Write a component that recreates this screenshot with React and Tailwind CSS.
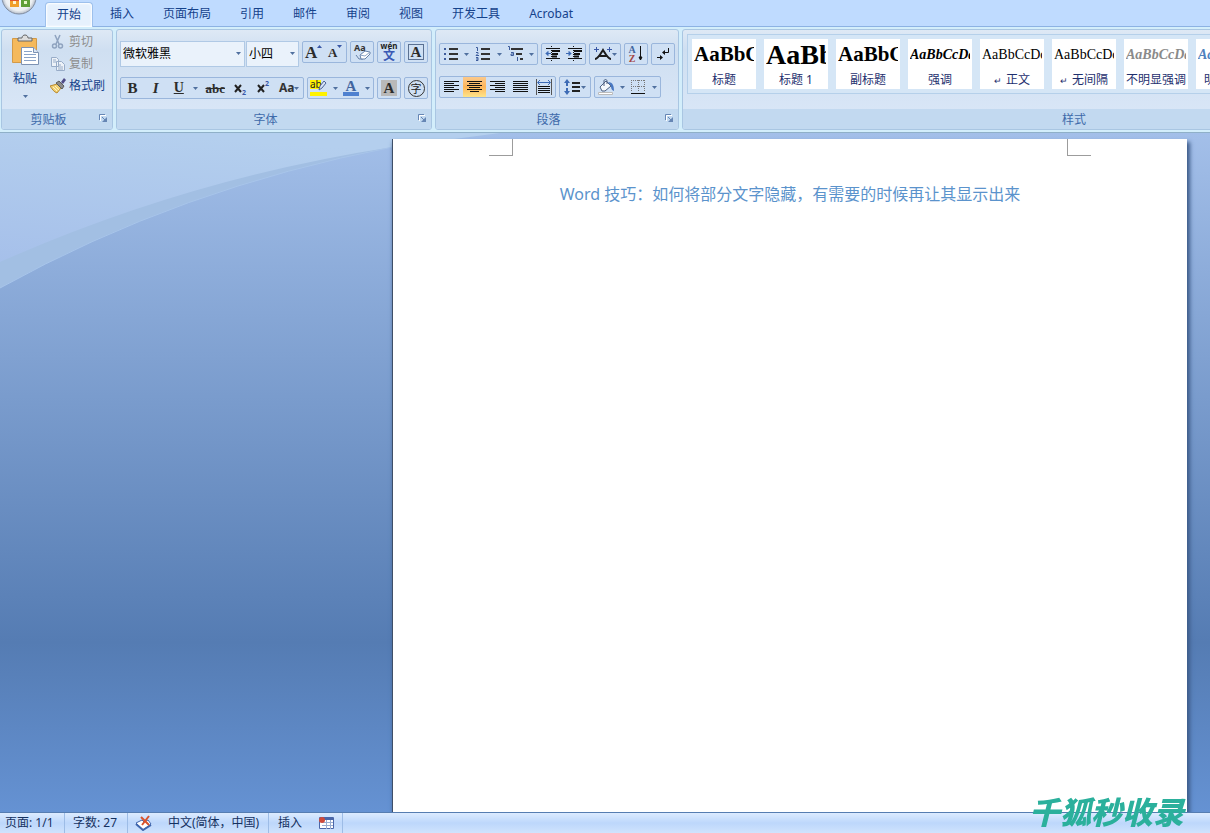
import clsx from "clsx";

const TABS = ["开始", "插入", "页面布局", "引用", "邮件", "审阅", "视图", "开发工具", "Acrobat"];

const STYLES = [
  { name: "标题", sample: "AaBbC", look: "text-[21px] font-bold text-black" },
  { name: "标题 1", sample: "AaBb", look: "text-[28px] font-bold text-black" },
  { name: "副标题", sample: "AaBbC", look: "text-[21px] font-bold text-black" },
  { name: "强调", sample: "AaBbCcDd", look: "text-[14px] font-bold italic text-black" },
  { name: "正文", sample: "AaBbCcDd", look: "text-[14px] text-black", mark: true },
  { name: "无间隔", sample: "AaBbCcDd", look: "text-[14px] text-black", mark: true },
  { name: "不明显强调", sample: "AaBbCcDd", look: "text-[14px] font-bold italic text-[#8a8a8a]" },
  { name: "明显强调", sample: "AaBbCcDd", look: "text-[14px] font-bold italic text-[#4f81bd]" },
];

export default function App() {
  return (
    <div className="flex h-screen flex-col overflow-hidden bg-[#bfdbff] font-['Noto_Sans','Noto_Sans_CJK_SC',sans-serif] text-[12px] leading-4 text-[#15428b]">
      <TabBar />
      <Ribbon />
      <Workspace />
      <StatusBar />
      <div className="pointer-events-none fixed right-[26px] bottom-1 font-['Noto_Sans_CJK_SC',sans-serif] text-[31px] leading-9 font-black text-[#2bb09c] italic">
        千狐秒收录
      </div>
    </div>
  );
}

function TabBar() {
  return (
    <header className="relative flex h-[27px] shrink-0 items-end border-b border-[#8db2e3] bg-[#bfdbff] pl-[45px]">
      <button aria-label="Office" className="absolute top-0 left-0">
        <OfficeOrb />
      </button>
      <nav className="flex items-end gap-[5px]">
        {TABS.map((tab, i) => (
          <button
            key={tab}
            className={clsx(
              "h-[25px] shrink-0 rounded-t border border-b-0 px-[11px] whitespace-nowrap",
              i === 0 ? "-mb-px border-[#9dc0ec] bg-[#e6f1fd] shadow-[inset_0_0_2px_1px_#ffffff]" : "border-transparent"
            )}
          >
            {tab}
          </button>
        ))}
      </nav>
    </header>
  );
}

function Ribbon() {
  return (
    <div className="flex h-[106px] shrink-0 gap-[3px] overflow-hidden border-b border-[#8fb0c8] bg-[#d3eefb] px-px pt-[2px] pb-[2px]">
      <Group title="剪贴板" className="w-[112px]" launcher>
        <Clipboard />
      </Group>
      <Group title="字体" className="w-[316px]" launcher>
        <FontGroup />
      </Group>
      <Group title="段落" className="w-[244px]" launcher>
        <ParagraphGroup />
      </Group>
      <Group title="样式" className="w-[784px]">
        <StyleGallery />
      </Group>
    </div>
  );
}

function Group({ title, className, launcher, children }) {
  return (
    <section
      className={clsx(
        "flex shrink-0 flex-col overflow-hidden rounded-[3px] border border-[#a9c6e2] bg-linear-to-b from-[#dee9f5] via-[#cfdff1] via-20% to-[#dbe8f8]",
        className
      )}
    >
      <div className="min-h-0 flex-1">{children}</div>
      <footer className="flex h-5 items-center bg-[#c2d9f0] pt-[2px] text-[#3e6aaa]">
        <span className={clsx("flex-1 text-center", launcher && "pr-1")}>{title}</span>
        {launcher && (
          <button aria-label={`${title}设置`} className="mr-1 mb-1">
            <svg width="9" height="9" fill="none" stroke="#6686b4">
              <path d="M1.500 7V1.500H7" stroke="#fff" />
              <path d="M.5 6V.5H6M3 3l3 3" />
              <path d="M8 3v5H3z" fill="#6686b4" stroke="none" />
            </svg>
          </button>
        )}
      </footer>
    </section>
  );
}

function Clipboard() {
  return (
    <div className="flex h-full gap-[2px]">
      <button className="flex w-[46px] flex-col items-center pt-1">
        <PasteIcon />
        <span className="mt-[5px]">粘贴</span>
        <Caret className="mt-2" />
      </button>
      <div className="flex flex-col gap-[2px] pt-[2px]">
        <button disabled className="flex h-5 items-center gap-[3px] text-[#8d8d8d]">
          <svg width="16" height="16" fill="none" stroke="#8fa3bf" strokeWidth="1.500">
            <path d="M5 1l4 9M10 1L6 10" />
            <circle cx="4.500" cy="12" r="2" />
            <circle cx="10.500" cy="12" r="2" />
          </svg>
          剪切
        </button>
        <button disabled className="flex h-5 items-center gap-[3px] text-[#8d8d8d]">
          <svg width="16" height="16" fill="#edf2f8" stroke="#98acc8">
            <path d="M1.500 1.500h5l2 2v7h-7zM6.500 5.500h5l3 3v6h-8z" />
            <path d="M3 4h3M3 6h3M8 9h3M8 11h5M8 13h5" />
          </svg>
          复制
        </button>
        <button className="flex h-5 items-center gap-[3px]">
          <svg width="16" height="16">
            <path d="M0 8l7-2 4 4-4 5c-3-1-5-4-7-7z" fill="#f0cf72" stroke="#b98a2f" />
            <path d="M3 9l4 4M5 8l4 4" stroke="#fff3c0" />
            <path d="M6 5l3-2 5 5-2 3z" fill="#8c8c8c" stroke="#5c5c5c" />
            <path d="M11 4l3-4 2 2-3 4z" fill="#4e4a86" />
          </svg>
          格式刷
        </button>
      </div>
    </div>
  );
}

function FontGroup() {
  return (
    <div className="flex flex-col gap-[10px] px-[3px] pt-[11px]">
      <div className="flex h-[26px] items-start gap-[3px]">
        <div className="flex gap-px">
          <Combo label="字体" value="微软雅黑" className="w-[125px]" />
          <Combo label="字号" value="小四" className="w-[53px]" />
        </div>
        <Box className="w-[45px]">
          <Tool label="增大字体">
            <Glyph size={17} className="font-bold">A</Glyph>
            <Tick up />
          </Tool>
          <Tool label="缩小字体">
            <Glyph size={13} className="font-bold">A</Glyph>
            <Tick />
          </Tool>
        </Box>
        <Box className="w-6">
          <Tool label="清除格式">
            <svg width="18" height="18">
              <text x="1" y="8" fontSize="9" fontWeight="700" fill="#333">Aa</text>
              <path d="M3 12l3 4h4" fill="none" stroke="#6681a8" />
              <path d="M7 12l5-4 5 1v2l-5 5H8z" fill="#fff" stroke="#6681a8" />
              <path d="M7 12l5 1 5-4" fill="none" stroke="#8da4c5" />
            </svg>
          </Tool>
        </Box>
        <Box className="w-6">
          <Tool label="拼音指南">
            <svg width="20" height="20">
              <text x="10" y="7" fontSize="8" fontWeight="700" textAnchor="middle" fill="#222">wén</text>
              <text x="10" y="18" fontSize="12" fontWeight="700" textAnchor="middle" fill="#3a59b5">文</text>
            </svg>
          </Tool>
        </Box>
        <Box className="w-6">
          <Tool label="字符边框">
            <span className="flex size-4 items-center justify-center border border-[#5b7192]">
              <Glyph size={15} className="font-bold">A</Glyph>
            </span>
          </Tool>
        </Box>
      </div>
      <div className="flex gap-[3px]">
        <Box className="w-[184px]">
          <Tool label="加粗"><Glyph size={15} className="font-bold">B</Glyph></Tool>
          <Tool label="倾斜"><Glyph size={15} className="font-bold italic">I</Glyph></Tool>
          <Tool label="下划线"><Glyph size={14} className="font-bold underline">U</Glyph></Tool>
          <DropArrow />
          <Tool label="删除线" wide><Glyph size={13} className="font-bold line-through">abc</Glyph></Tool>
          <Tool label="下标">
            <Script y={15} />
          </Tool>
          <Tool label="上标">
            <Script y={6} />
          </Tool>
          <Tool label="更改大小写" wide>
            <span className="text-[12px] font-bold text-[#333]">Aa</span>
            <Caret />
          </Tool>
        </Box>
        <Box className="w-[67px]">
          <Tool label="突出显示">
            <svg width="20" height="20">
              <path d="M1 2h11v9H1zM1 14h17v4H1z" fill="#fff200" />
              <text x="1" y="10" fontSize="10" fill="#222">ab</text>
              <path d="M10 12l1-4 4-5 2 2-4 5z" fill="#d7e3f6" stroke="#4b6397" />
            </svg>
          </Tool>
          <DropArrow />
          <Tool label="字体颜色">
            <svg width="18" height="20">
              <text x="9" y="13" fontSize="15" fontWeight="700" textAnchor="middle" fill="#42659f" fontFamily="Liberation Serif, serif">A</text>
              <path d="M1 14h16v4H1z" fill="#4f81d0" />
            </svg>
          </Tool>
          <DropArrow />
        </Box>
        <Box className="w-6">
          <Tool label="字符底纹">
            <span className="flex size-4 items-center justify-center bg-[#b9b9b9]">
              <Glyph size={15} className="font-bold">A</Glyph>
            </span>
          </Tool>
        </Box>
        <Box className="w-6">
          <Tool label="带圈字符">
            <span className="flex size-[17px] items-center justify-center rounded-full border border-[#333] text-[11px] leading-none text-[#222]">
              字
            </span>
          </Tool>
        </Box>
      </div>
    </div>
  );
}

function ParagraphGroup() {
  return (
    <div className="flex flex-col gap-[11px] px-[3px] pt-[13px]">
      <div className="flex gap-[3px]">
        <Box className="w-[99px]">
          <Tool label="项目符号">
            <Lines rows={[[6, 9], [6, 9], [6, 9]]} step={5}>
              <path d="M1 2h2v2H1zM1 7h2v2H1zM1 12h2v2H1z" fill="#3d5c9c" />
            </Lines>
          </Tool>
          <DropArrow />
          <Tool label="编号">
            <Lines rows={[[6, 9], [6, 9], [6, 9]]} step={5}>
              <path d="M1 1.500h1.500V5M1 6.500h2v1L1 9.500h3M1 11.500h2v3H1m0-1.500h2" stroke="#3d5c9c" fill="none" />
            </Lines>
          </Tool>
          <DropArrow />
          <Tool label="多级列表">
            <Lines rows={[[4, 12], [9, 6], [13, 3]]} step={5}>
              <path d="M1 .5h1.500V4M4 6.500h2.500v3H4V8h2M10.500 11v4" stroke="#3d5c9c" fill="none" />
            </Lines>
          </Tool>
          <DropArrow />
        </Box>
        <Box className="w-[45px]">
          <Tool label="减少缩进量"><IndentIcon left /></Tool>
          <Tool label="增加缩进量"><IndentIcon /></Tool>
        </Box>
        <Box className="w-8">
          <Tool label="中文版式">
            <svg width="18" height="16" fill="none" stroke="#1c1c1c" strokeWidth="2">
              <path d="M1 13c3 0 5-4 8-9 3 5 5 9 8 9M6 10h6" />
              <path d="M0 3.500h5M2.500 1v5M13 3.500h5M15.500 1v5" stroke="#3856a5" strokeWidth="1" />
            </svg>
            <Caret />
          </Tool>
        </Box>
        <Box className="w-6">
          <Tool label="排序">
            <svg width="18" height="18">
              <text x="5" y="8" fontSize="10" fontWeight="700" textAnchor="middle" fill="#42659f" fontFamily="Liberation Serif, serif">A</text>
              <text x="5" y="17" fontSize="10" fontWeight="700" textAnchor="middle" fill="#a34545" fontFamily="Liberation Serif, serif">Z</text>
              <path d="M13.500 1v14M12 12l1.500 3 1.500-3z" stroke="#111" fill="#111" />
            </svg>
          </Tool>
        </Box>
        <Box className="w-6">
          <Tool label="显示编辑标记">
            <svg width="14" height="16" fill="none" stroke="#111">
              <path d="M12.500 2v4.500H7" />
              <path d="M9 4L6 6.500 9 9zM4 9l3 2.500L4 14z" fill="#111" stroke="none" />
              <path d="M1 11.500h4" />
            </svg>
          </Tool>
        </Box>
      </div>
      <div className="flex gap-[3px]">
        <Box className="w-[117px]">
          <Tool label="左对齐">
            <Lines rows={[[0, 15], [0, 10], [0, 15], [0, 10], [0, 15], [0, 10]]} step={2} />
          </Tool>
          <Tool label="居中" active>
            <Lines rows={[[0, 15], [2, 11], [0, 15], [2, 11], [0, 15], [3, 9]]} step={2} />
          </Tool>
          <Tool label="右对齐">
            <Lines rows={[[0, 15], [5, 10], [0, 15], [5, 10], [0, 15], [5, 10]]} step={2} />
          </Tool>
          <Tool label="两端对齐">
            <Lines rows={[[0, 15], [0, 15], [0, 15], [0, 15], [0, 15], [0, 15]]} step={2} />
          </Tool>
          <Tool label="分散对齐">
            <svg width="16" height="16" fill="none" stroke="#111">
              <path d="M2 7.500h12M2 9.500h12M2 11.500h12M2 13.500h12" />
              <path d="M.5 0v16M15.500 0v16" stroke="#555" />
              <path d="M2 3.500h12M4 1L1.500 3.500 4 6M12 1l2.500 2.500L12 6" stroke="#3d6bb5" />
            </svg>
          </Tool>
        </Box>
        <Box className="w-8">
          <Tool label="行距">
            <svg width="17" height="16" fill="#3d6bb5">
              <path d="M8 3h8v2H8zM8 7h8v2H8zM8 11h8v2H8z" fill="#222" />
              <path d="M0 4l3-4 3 4H4v3H2V4zM0 12l3 4 3-4H4V9H2v3z" />
            </svg>
            <Caret />
          </Tool>
        </Box>
        <Box className="w-[67px]">
          <Tool label="底纹">
            <svg width="18" height="17">
              <path d="M3 8l6-6 5 5-6 5H5z" fill="#f4f7fb" stroke="#4c5f80" />
              <path d="M7 7V2c0-2 3-2 3 0v3" fill="none" stroke="#4c5f80" />
              <path d="M11 3c5 0 6 4 6 9-3-1-3-4-3-5z" fill="#4878c2" />
              <path d="M1.500 13.500h14v2h-14z" fill="#fff" stroke="#bbb" />
            </svg>
          </Tool>
          <DropArrow />
          <Tool label="边框">
            <svg width="14" height="14" fill="none" stroke="#777">
              <path d="M0 .5h14M.5 0v12M7.500 0v12M13.500 0v12M0 6.500h14" strokeDasharray="1 1" />
              <path d="M0 13.500h14" stroke="#111" />
            </svg>
          </Tool>
          <DropArrow />
        </Box>
      </div>
    </div>
  );
}

function StyleGallery() {
  return (
    <div className="mx-1 mt-1 flex h-[60px] gap-2 border border-[#b5d0ea] bg-[#d5e6f6] p-1">
      {STYLES.map((s) => (
        <button key={s.name} className="flex h-[50px] w-16 shrink-0 flex-col bg-white text-[#1e2f6e]">
          <span className="flex h-[33px] w-full items-start px-[2px]">
            <span className={clsx("w-full overflow-hidden text-left font-['Liberation_Serif',serif] leading-[31px]", s.look)}>
              {s.sample}
            </span>
          </span>
          <span className="w-full text-center whitespace-nowrap">
            {s.mark && <span className="mr-1 text-[9px]">↵</span>}
            {s.name}
          </span>
        </button>
      ))}
    </div>
  );
}

function Workspace() {
  return (
    <main className="relative flex min-h-0 flex-1 overflow-hidden bg-linear-to-b from-[#a3bfe9] via-[#557cb3] via-75% to-[#6592d3] pt-[6px] pr-[23px]">
      <svg className="absolute top-0 left-0" width="560" height="160">
        <defs>
          <linearGradient id="sky" x1="0" y1="1" x2="0.300" y2="0">
            <stop offset="0" stopColor="#a6c0ea" />
            <stop offset="1" stopColor="#b4cfee" />
          </linearGradient>
        </defs>
        <path d="M0 0H500L393 14Q180 55 0 155z" fill="#a2bfe3" />
        <path d="M0 0H500L393 14Q190 45 0 129z" fill="url(#sky)" />
        <path d="M393 14Q180 55 0 155" fill="none" stroke="#a8c5ea" />
      </svg>
      <div className="flex-1" />
      <article className="relative w-[795px] border-l border-[#3f4f68] bg-white shadow-[2px_4px_4px_1px_#3d5c8a]">
        <div className="flex justify-between px-24">
          <span className="h-[17px] w-6 border-r border-b border-[#9c9c9c]" />
          <span className="h-[17px] w-6 border-b border-l border-[#9c9c9c]" />
        </div>
        <p className="mt-[26px] text-center text-[16px] leading-6 text-[#5b93cc]">
          Word 技巧：如何将部分文字隐藏，有需要的时候再让其显示出来
        </p>
      </article>
    </main>
  );
}

function StatusBar() {
  return (
    <footer className="relative flex h-[21px] shrink-0 items-center border-t border-[#567db1] bg-linear-to-b from-[#dcebff] via-[#bdd7fb] to-[#cfe3fd] text-[#15315f]">
      <StatusItem className="w-[65px] pl-[5px]">页面: 1/1</StatusItem>
      <StatusItem className="w-[63px] pl-2">字数: 27</StatusItem>
      <StatusItem className="w-[141px] gap-4 pl-[7px]">
        <svg width="17" height="16">
          <path d="M1 8l6-3 2 2 4-2 3 4-8 6z" fill="#fff" stroke="#3f66ad" />
          <path d="M1 9l7 6 8-5" fill="none" stroke="#3f66ad" strokeWidth="2" />
          <path d="M6 2l8 8M14 1L7 10" stroke="#d9532c" strokeWidth="2" />
        </svg>
        中文(简体，中国)
      </StatusItem>
      <StatusItem className="w-[74px] gap-4 pl-[9px]">
        插入
        <svg width="16" height="14">
          <path d="M1.500 1.500h14v11h-14z" fill="#fff" stroke="#4a66a8" />
          <path d="M2 3h13" stroke="#4a66a8" strokeWidth="2" />
          <path d="M4 6.500h11M4 9.500h11M8.500 4v9M12.500 4v9" stroke="#9aaed2" />
          <circle cx="4" cy="4" r="3" fill="#cf4b3c" />
        </svg>
      </StatusItem>
    </footer>
  );
}

function StatusItem({ className, children }) {
  return (
    <div className={clsx("flex h-full items-center border-r border-[#9dbce6] whitespace-nowrap", className)}>
      {children}
    </div>
  );
}

function Combo({ label, value, className }) {
  return (
    <label className={clsx("relative block", className)}>
      <select
        aria-label={label}
        className="h-[26px] w-full appearance-none border border-[#b0c9e5] bg-[#eaf2fb] pl-[2px] text-[12px] text-black"
      >
        <option>{value}</option>
      </select>
      <Caret className="pointer-events-none absolute top-[11px] right-1" />
    </label>
  );
}

function Box({ className, children }) {
  return (
    <div className={clsx("flex h-[22px] shrink-0 rounded-[2px] border border-[#9ab6dc] bg-[#cfe0f4]", className)}>
      {children}
    </div>
  );
}

function Tool({ label, wide, active, children }) {
  return (
    <button
      aria-label={label}
      className={clsx(
        "flex h-full min-w-0 items-center justify-center",
        wide ? "flex-[1.200]" : "flex-1",
        active && "bg-linear-to-b from-[#fbc98b] via-[#fdb558] to-[#fee58a]"
      )}
    >
      {children}
    </button>
  );
}

function DropArrow() {
  return (
    <button aria-label="更多" className="flex h-full w-[11px] shrink-0 items-center justify-center">
      <Caret />
    </button>
  );
}

function Caret({ className }) {
  return (
    <svg width="5" height="3" className={clsx("shrink-0", className)}>
      <path d="M0 0h5L2.500 3z" fill="#50709f" />
    </svg>
  );
}

function Tick({ up }) {
  return (
    <svg width="5" height="3" className="mb-3 shrink-0">
      <path d={up ? "M0 3h5L2.500 0z" : "M0 0h5L2.500 3z"} fill="#3856a5" />
    </svg>
  );
}

function Glyph({ size, className, children }) {
  const sizes = { 13: "text-[13px]", 14: "text-[14px]", 15: "text-[15px]", 17: "text-[17px]" };
  return (
    <span className={clsx("font-['Liberation_Serif',serif] leading-none text-[#2c2c2c]", sizes[size], className)}>
      {children}
    </span>
  );
}

function Script({ y }) {
  return (
    <svg width="15" height="18">
      <path d="M2 6l6 7M8 6l-6 7" stroke="#222" strokeWidth="2" />
      <text x="9" y={y + 1} fontSize="7" fontWeight="700" fill="#3856a5">2</text>
    </svg>
  );
}

// rows are [start, length] pairs
function Lines({ rows, step, children }) {
  const dense = step === 2;
  return (
    <svg width={dense ? 15 : 16} height="16" className="shrink-0">
      {rows.map(([x, w], i) => (
        <rect key={i} x={x} y={2 + i * step} width={w} height={dense ? 1 : 2} fill={dense ? "#111" : "#333"} />
      ))}
      {children}
    </svg>
  );
}

function IndentIcon({ left }) {
  return (
    <svg width="17" height="16" fill="none" stroke="#111">
      <path d="M2 2.500h14M2 12.500h14" />
      <path d="M8 5h8M8 8h6M8 10.500h5" strokeWidth="2" />
      <path d="M7.500 0v16" strokeDasharray="1 1" />
      <path
        d={left ? "M2 7.500h5M4 5.500L2 7.500l2 2z" : "M0 7.500h5M3 5.500l2 2-2 2z"}
        stroke="#3d6bb5"
        fill="#3d6bb5"
      />
    </svg>
  );
}

function PasteIcon() {
  return (
    <svg width="28" height="32">
      <path d="M1.500 4.500h24v24h-24z" fill="#f5b95c" stroke="#d39a48" />
      <path d="M7 7V4h4c0-4 6-4 6 0h4v3z" fill="#ddd" stroke="#666" />
      <path d="M10.500 13.500h12l5 5v12h-17z" fill="#fff" stroke="#7d92b3" />
      <path d="M22.500 13.500v5h5" fill="#dbe6f4" stroke="#7d92b3" />
      <path d="M13 17.500h8M13 20.500h12M13 23.500h12M13 26.500h12" stroke="#8aa3c8" />
    </svg>
  );
}

function OfficeOrb() {
  return (
    <svg width="40" height="17">
      <defs>
        <radialGradient id="orb" cx="0.5" cy="0.5" r="0.5">
          <stop offset="0" stopColor="#fff" />
          <stop offset="0.800" stopColor="#eceff2" />
          <stop offset="1" stopColor="#b5bdc9" />
        </radialGradient>
      </defs>
      <circle cx="19" cy="-3" r="17" fill="url(#orb)" stroke="#7f8ca0" />
      <path d="M10 -2h9v9h-9z" fill="#f0a02c" />
      <path d="M10 -2h9v3h-9z" fill="#e2572b" />
      <path d="M13 1h3v3h-3z" fill="#fff3d0" />
      <path d="M21 -2h9v9h-9z" fill="#5f9f38" />
      <path d="M24 1h3v3h-3z" fill="#e6f5c8" />
    </svg>
  );
}
